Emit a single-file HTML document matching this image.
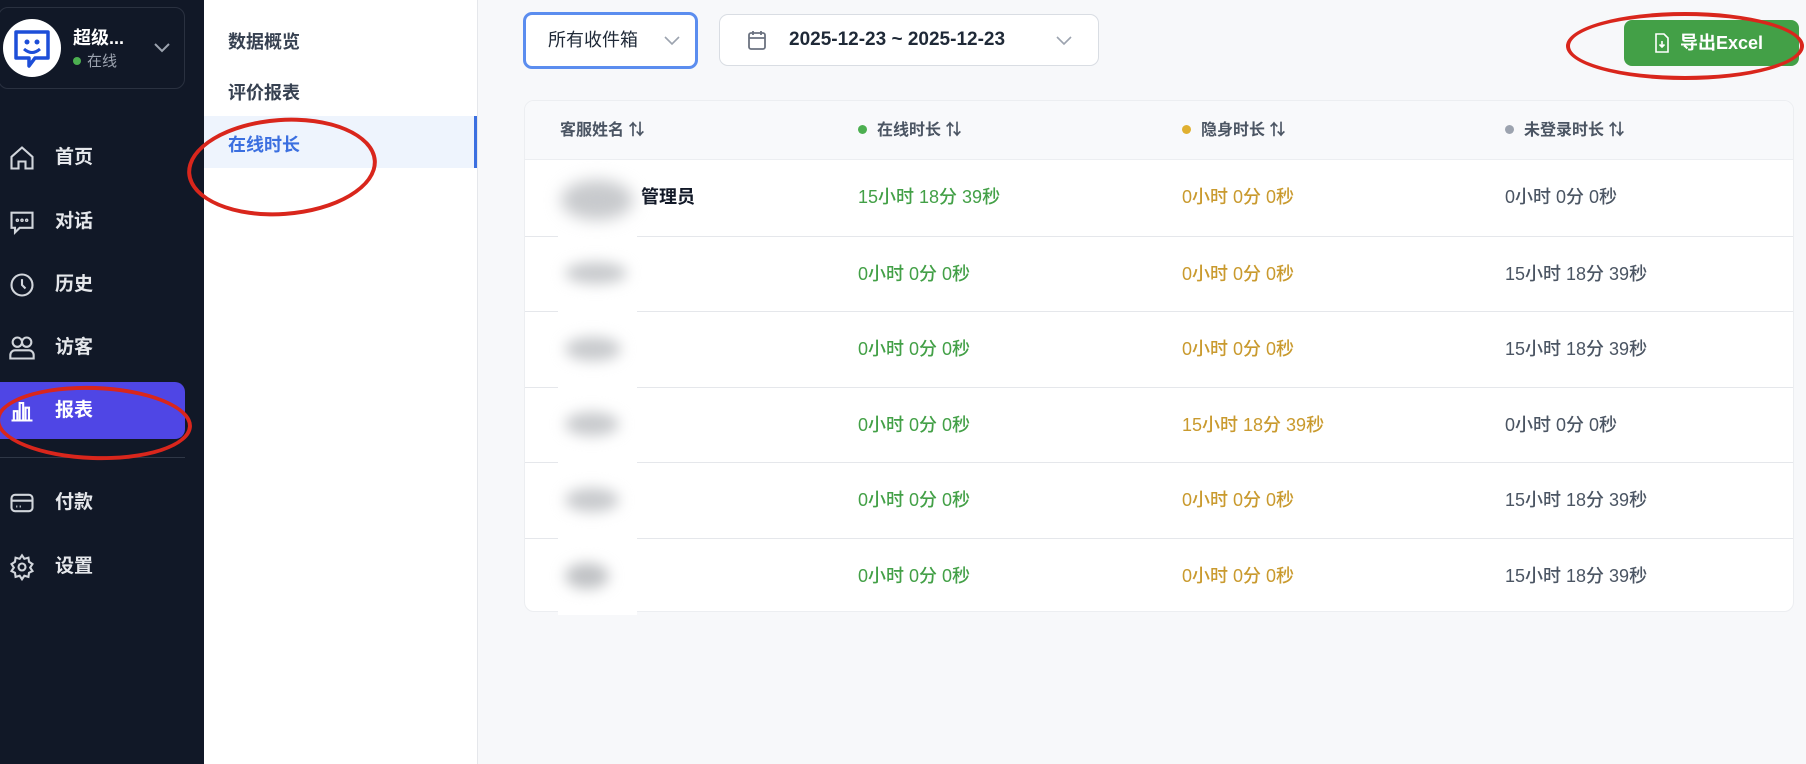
<!DOCTYPE html>
<html><head><meta charset="utf-8"><style>
*{margin:0;padding:0;box-sizing:border-box}
body{width:1806px;height:764px;overflow:hidden;background:#f7f8fa;font-family:"Liberation Sans","Noto Sans CJK SC",sans-serif;position:relative}
.abs{position:absolute}
#side{left:0;top:0;width:204px;height:764px;background:#111827}
.nav{position:absolute;left:0;width:185px;height:40px;color:#e5e7eb;font-size:19px;font-weight:bold;line-height:40px}
.nav span{position:absolute;left:55px}
.nav svg{position:absolute;left:7px;top:6px}
#sub{left:204px;top:0;width:274px;height:764px;background:#fff;border-right:1px solid #e5e7eb}
.si{position:absolute;left:24px;font-size:18px;font-weight:bold;color:#374151}
.th{position:absolute;top:100px;height:59px;line-height:59px;font-size:16px;color:#4b5563;font-weight:bold}
.row{position:absolute;left:0;width:100%;height:75px;border-top:1px solid #e5e7eb}
.c{position:absolute;top:0;line-height:75px;font-size:18px;font-weight:500}
.g{color:#43a047}.y{color:#c99a2e}.k{color:#4b5563}
.dot{display:inline-block;width:9px;height:9px;border-radius:50%;margin-right:10px;vertical-align:1px}
.ell{position:absolute;border:4px solid #d9261c;border-radius:50%}
</style></head><body>
<div id="side" class="abs">
  <div class="abs" style="left:-2px;top:7px;width:187px;height:82px;border:1px solid #2a3140;border-radius:10px"></div>
  <div class="abs" style="left:3px;top:19px;width:58px;height:58px;border-radius:50%;background:#fff">
    <svg width="58" height="58" viewBox="0 0 58 58"><path d="M13 13h32v26H32l-6 8v-8H13z" fill="none" stroke="#1d4ed8" stroke-width="3.5" stroke-linejoin="round"/><circle cx="24" cy="23" r="2.5" fill="#1d4ed8"/><circle cx="34" cy="23" r="2.5" fill="#1d4ed8"/><path d="M21 30q8 7 16 0" fill="none" stroke="#1d4ed8" stroke-width="3"/></svg>
  </div>
  <div class="abs" style="left:73px;top:24px;color:#fff;font-size:18px;font-weight:bold">超级...</div>
  <div class="abs" style="left:73px;top:50px;color:#9ca3af;font-size:15px"><span class="dot" style="background:#4caf50;width:8px;height:8px;margin-right:6px"></span>在线</div>
  <svg class="abs" style="left:153px;top:42px" width="18" height="12"><path d="M2 2l7 7 7-7" fill="none" stroke="#9ca3af" stroke-width="2"/></svg>

  <div class="nav" style="top:138px"><svg width="30" height="28" viewBox="0 0 24 24" fill="none" stroke="#d1d5db" stroke-width="1.8"><path d="M3 11l9-8 9 8v10h-6v-6H9v6H3z"/></svg><span>首页</span></div>
  <div class="nav" style="top:202px"><svg width="30" height="28" viewBox="0 0 24 24" fill="none" stroke="#d1d5db" stroke-width="1.8"><path d="M3 4h18v13h-11l-4 4v-4H3z"/><circle cx="8" cy="10.5" r=".6"/><circle cx="12" cy="10.5" r=".6"/><circle cx="16" cy="10.5" r=".6"/></svg><span>对话</span></div>
  <div class="nav" style="top:265px"><svg width="30" height="28" viewBox="0 0 24 24" fill="none" stroke="#d1d5db" stroke-width="1.8"><circle cx="12" cy="12" r="9"/><path d="M12 7v5l3 3"/></svg><span>历史</span></div>
  <div class="nav" style="top:328px"><svg width="30" height="28" viewBox="0 0 24 24" fill="none" stroke="#d1d5db" stroke-width="1.8"><circle cx="8" cy="7" r="4"/><circle cx="16" cy="7" r="4"/><path d="M2 21v-3a4 4 0 014-4h12a4 4 0 014 4v3z"/></svg><span>访客</span></div>
  <div class="nav" style="top:382px;height:57px;line-height:57px;background:#4f46e5;border-radius:0 10px 10px 0;color:#fff"><svg style="top:14px" width="30" height="28" viewBox="0 0 24 24" fill="none" stroke="#fff" stroke-width="1.8"><path d="M3 21h18M5 21V13h3v8M10 21V6h3v15M15 21V10h3v11"/></svg><span>报表</span></div>
  <div class="abs" style="left:0;top:457px;width:185px;height:1px;background:#2f3746"></div>
  <div class="nav" style="top:483px"><svg width="30" height="28" viewBox="0 0 24 24" fill="none" stroke="#d1d5db" stroke-width="1.8"><rect x="3" y="5" width="18" height="14" rx="3"/><path d="M3 10h18M7 15h1M10 15h1"/></svg><span>付款</span></div>
  <div class="nav" style="top:547px"><svg width="30" height="28" viewBox="0 0 24 24" fill="none" stroke="#d1d5db" stroke-width="1.8"><circle cx="12" cy="12" r="3"/><path d="M12 2l2 3 3.5-1 .5 3.5 3 2-2 3 2 3-3 1.5-.5 3.5-3.5-1-2 3-2-3-3.5 1L6 17l-3-1.5 2-3-2-3 3-2L6.5 4 10 5z"/></svg><span>设置</span></div>
</div>

<div id="sub" class="abs">
  <div class="si" style="top:28px">数据概览</div>
  <div class="si" style="top:79px">评价报表</div>
  <div class="abs" style="left:0;top:116px;width:273px;height:52px;background:#eef4fd;border-right:3px solid #3b6fe0"></div>
  <div class="si" style="top:131px;color:#3b6fe0">在线时长</div>
</div>

<div class="abs" style="left:523px;top:12px;width:175px;height:57px;border:3px solid #5b8def;border-radius:9px;background:#fff;font-size:18px;color:#1f2937;line-height:51px;padding-left:22px">所有收件箱<svg class="abs" style="left:138px;top:21px" width="16" height="10"><path d="M1 1l7 7 7-7" fill="none" stroke="#9ca3af" stroke-width="1.6"/></svg></div>
<div class="abs" style="left:719px;top:14px;width:380px;height:52px;border:1px solid #d9dde3;border-radius:9px;background:#fff;font-size:19px;color:#1f2937;line-height:50px;padding-left:69px;font-weight:bold">2025-12-23 ~ 2025-12-23
  <svg class="abs" style="left:25px;top:13px" width="24" height="24" viewBox="0 0 24 24" fill="none" stroke="#6b7280" stroke-width="1.8"><rect x="4" y="5" width="16" height="16" rx="2"/><path d="M4 10h16M8 3v4M16 3v4"/></svg>
  <svg class="abs" style="left:336px;top:21px" width="16" height="10"><path d="M1 1l7 7 7-7" fill="none" stroke="#9ca3af" stroke-width="1.6"/></svg></div>
<div class="abs" style="left:1624px;top:20px;width:175px;height:46px;background:#43a047;border-radius:8px;color:#fff;font-size:18px;font-weight:bold;line-height:46px;padding-left:56px">导出Excel
  <svg class="abs" style="left:29px;top:13px" width="18" height="20" viewBox="0 0 18 20" fill="none" stroke="#fff" stroke-width="1.6"><path d="M3 1h8l4 4v14H3z"/><path d="M9 8v6M6.5 11.5L9 14l2.5-2.5"/></svg></div>

<div class="abs" style="left:524px;top:100px;width:1270px;height:512px;background:#fff;border:1px solid #eceef1;border-radius:10px;overflow:hidden">
  <div class="abs" style="left:0;top:0;width:100%;height:59px;background:#f8f9fb;border-bottom:1px solid #eceef1"></div>
  <div class="th" style="top:0;left:35px">客服姓名 ⇅</div>
  <div class="th" style="top:0;left:333px"><span class="dot" style="background:#4caf50"></span>在线时长 ⇅</div>
  <div class="th" style="top:0;left:657px"><span class="dot" style="background:#e0b030"></span>隐身时长 ⇅</div>
  <div class="th" style="top:0;left:980px"><span class="dot" style="background:#9ca3af"></span>未登录时长 ⇅</div>
  <div class="row" style="top:59px;border-top:none"><div class="c" style="left:116px;font-weight:bold;color:#111827">管理员</div><div class="c g" style="left:333px">15小时 18分 39秒</div><div class="c y" style="left:657px">0小时 0分 0秒</div><div class="c k" style="left:980px">0小时 0分 0秒</div></div>
  <div class="row" style="top:135px"><div class="c g" style="left:333px">0小时 0分 0秒</div><div class="c y" style="left:657px">0小时 0分 0秒</div><div class="c k" style="left:980px">15小时 18分 39秒</div></div>
  <div class="row" style="top:210px"><div class="c g" style="left:333px">0小时 0分 0秒</div><div class="c y" style="left:657px">0小时 0分 0秒</div><div class="c k" style="left:980px">15小时 18分 39秒</div></div>
  <div class="row" style="top:286px"><div class="c g" style="left:333px">0小时 0分 0秒</div><div class="c y" style="left:657px">15小时 18分 39秒</div><div class="c k" style="left:980px">0小时 0分 0秒</div></div>
  <div class="row" style="top:361px"><div class="c g" style="left:333px">0小时 0分 0秒</div><div class="c y" style="left:657px">0小时 0分 0秒</div><div class="c k" style="left:980px">15小时 18分 39秒</div></div>
  <div class="row" style="top:437px"><div class="c g" style="left:333px">0小时 0分 0秒</div><div class="c y" style="left:657px">0小时 0分 0秒</div><div class="c k" style="left:980px">15小时 18分 39秒</div></div>
</div>
<div class="abs" style="left:558px;top:170px;width:79px;height:445px;background:#fff"></div>
<div class="abs" style="left:561px;top:180px;width:72px;height:40px;background:#c8cacd;filter:blur(8px);border-radius:50%"></div>
<div class="abs" style="left:565px;top:262px;width:62px;height:22px;background:#c8cacd;filter:blur(7px);border-radius:50%"></div>
<div class="abs" style="left:565px;top:337px;width:56px;height:24px;background:#c8cacd;filter:blur(7px);border-radius:50%"></div>
<div class="abs" style="left:565px;top:412px;width:54px;height:24px;background:#c8cacd;filter:blur(7px);border-radius:50%"></div>
<div class="abs" style="left:565px;top:488px;width:54px;height:24px;background:#c8cacd;filter:blur(7px);border-radius:50%"></div>
<div class="abs" style="left:565px;top:563px;width:44px;height:26px;background:#c0c2c5;filter:blur(7px);border-radius:50%"></div>

<div class="ell" style="left:187px;top:118px;width:190px;height:98px;transform:rotate(-4deg)"></div>
<div class="ell" style="left:-4px;top:386px;width:196px;height:74px;transform:rotate(2deg)"></div>
<div class="ell" style="left:1566px;top:12px;width:238px;height:68px"></div>
</body></html>
